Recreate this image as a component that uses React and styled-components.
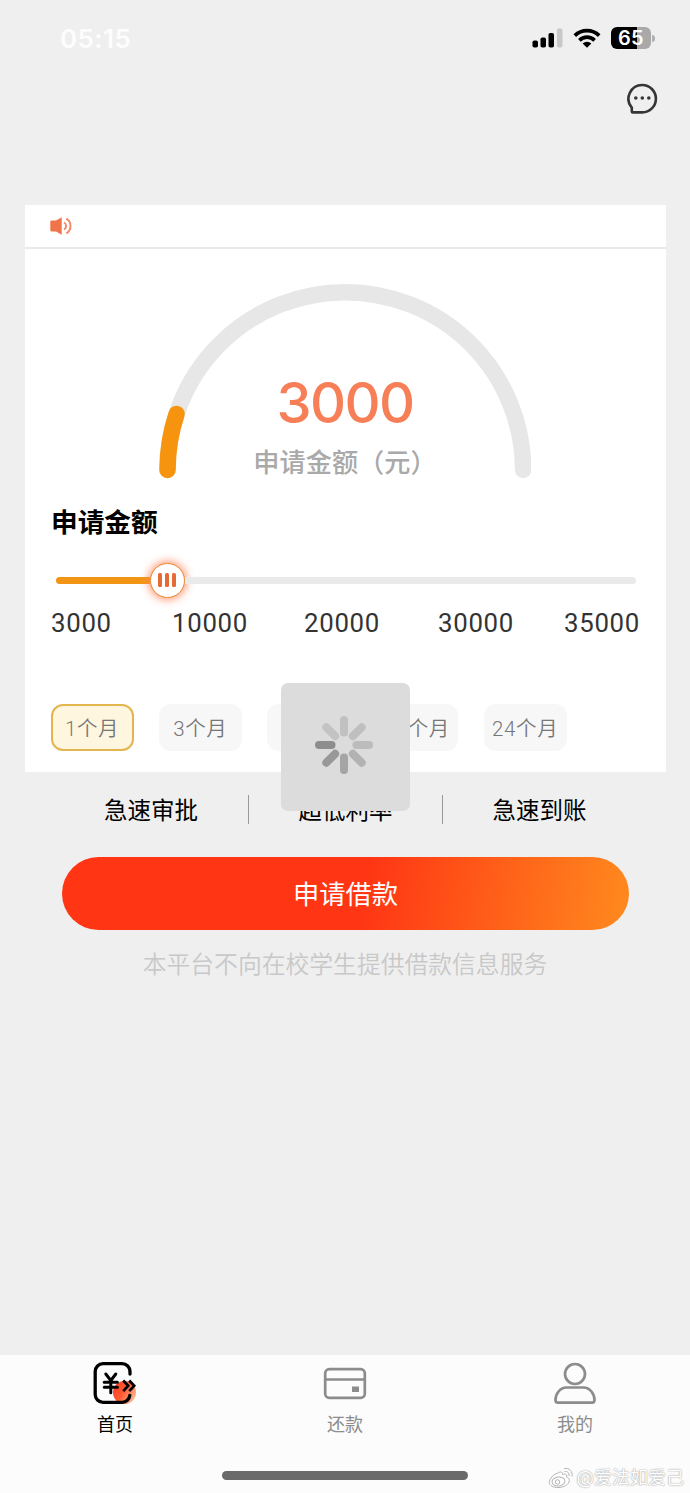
import React from 'react';
import styled, { createGlobalStyle } from 'styled-components';

const GlobalStyle = createGlobalStyle`
  * {
    box-sizing: border-box;
  }

  body {
    margin: 0;
    background: #efefef;
    font-family: Inter, "Noto Sans CJK SC", sans-serif;
  }
`;

const Screen = styled.div`
  position: relative;
  width: 690px;
  height: 1493px;
  display: flex;
  flex-direction: column;
  background: #efefef;
  overflow: hidden;
`;

const StatusBar = styled.div`
  height: 76px;
  padding: 0 35px 0 60px;
  display: flex;
  align-items: center;
  justify-content: space-between;
`;

const Clock = styled.span`
  font-size: 26px;
  font-weight: 600;
  letter-spacing: 0.4px;
  color: #fdfdfd;
`;

const StatusIcons = styled.div`
  display: flex;
  align-items: center;
  gap: 10px;

  svg {
    display: block;
  }
`;

const Battery = styled.div`
  display: flex;
  align-items: center;
  gap: 1px;
`;

const BatteryBody = styled.div`
  width: 40px;
  height: 22px;
  border-radius: 6px;
  background: linear-gradient(90deg, #000 ${props => props.$level}%, #a9a9a9 ${props => props.$level}%);
  color: #fff;
  font-size: 20px;
  font-weight: 600;
  line-height: 23px;
  letter-spacing: 0.4px;
  text-align: center;
`;

const BatteryTip = styled.div`
  width: 3px;
  height: 7px;
  border-radius: 0 3px 3px 0;
  background: #b0b0b0;
`;

const Header = styled.div`
  height: 129px;
  padding: 7px 32px 0 0;
  display: flex;
  justify-content: flex-end;
  align-items: flex-start;
`;

const Card = styled.section`
  width: 640.5px;
  height: 567px;
  margin-left: 25px;
  background: #fff;
  display: flex;
  flex-direction: column;
`;

const Notice = styled.div`
  height: 44px;
  padding: 0 25px;
  display: flex;
  align-items: center;
  border-bottom: 2px solid #e9e9e9;
`;

const Gauge = styled.div`
  width: 372px;
  height: 196px;
  margin: 34px 0 0 134px;
  display: grid;

  > * {
    grid-area: 1 / 1;
  }
`;

const GaugeText = styled.div`
  padding-top: 85px;
  display: flex;
  flex-direction: column;
  align-items: center;
`;

const GaugeAmount = styled.div`
  height: 70px;
  font-size: 56px;
  font-weight: 500;
  line-height: 70px;
  letter-spacing: -1.7px;
  color: #f77f58;
`;

const GaugeLabel = styled.div`
  height: 40px;
  margin: 5px 0 0;
  font-size: 26.2px;
  font-weight: 500;
  line-height: 40px;
  color: #a9a9a9;
`;

const SectionTitle = styled.h2`
  height: 40px;
  margin: 23px 0 0 26px;
  font-size: 26.7px;
  font-weight: 700;
  line-height: 40px;
  color: #000;
`;

const Slider = styled.div`
  width: 580px;
  height: 36px;
  margin: 20px 0 0 30.5px;
  display: flex;
  align-items: center;
`;

const SliderFill = styled.div`
  width: ${props => props.$width}px;
  height: 7px;
  border-radius: 4px 0 0 4px;
  background: #f39514;
`;

const SliderRest = styled.div`
  flex: 1;
  height: 7px;
  border-radius: 0 4px 4px 0;
  background: #eaeaea;
`;

const SliderThumb = styled.div`
  width: 35px;
  height: 35px;
  border: 1.5px solid #e8892c;
  border-radius: 50%;
  background: #fff;
  box-shadow: 0 0 10px 1px #ff8458;
  display: flex;
  align-items: center;
  justify-content: center;
  gap: 3px;
`;

const Grip = styled.i`
  width: 4px;
  height: 14px;
  border-radius: 1.5px;
  background: #e56a35;
`;

const Scale = styled.div`
  height: 40px;
  margin: 6px 0 0 26px;
  display: grid;
  grid-template-columns: 121px 132px 134px 126px 78px;
`;

const ScaleMark = styled.span`
  font-family: Roboto, Inter, sans-serif;
  font-size: 25.8px;
  line-height: 39px;
  letter-spacing: 0.7px;
  color: #333;
`;

const Terms = styled.div`
  margin: 60px 0 0 25.5px;
  display: flex;
  gap: 25.3px;
`;

const Term = styled.button`
  width: 83px;
  height: 47px;
  padding: 3px 0 0;
  border: ${props => props.$active ? '2px solid #e3b54c' : '0'};
  border-radius: 12px;
  background: ${props => props.$active ? '#fff6df' : '#f7f7f7'};
  font-family: Roboto, "Noto Sans CJK SC", sans-serif;
  font-size: 20.5px;
  font-weight: 350;
  line-height: 40px;
  letter-spacing: 0.6px;
  white-space: nowrap;
  color: #777;
`;

const Features = styled.div`
  height: 75px;
  padding: 0 54px;
  display: grid;
  grid-template-columns: repeat(3, 194px);
  align-items: center;
`;

const Feature = styled.div`
  height: 29px;
  border-left: ${props => props.$divided ? '1.5px solid #999' : '0'};
  font-size: 23.5px;
  line-height: 31px;
  text-align: center;
  color: #000;
`;

const ApplyButton = styled.button`
  width: 567px;
  height: 73px;
  margin: 10px 0 0 61.5px;
  padding: 1px 0 0 1px;
  border: 0;
  border-radius: 37px;
  background: linear-gradient(98deg, #ff3514 0%, #ff3514 53%, #ff8a1e 100%);
  font-family: inherit;
  font-size: 26.3px;
  line-height: 73px;
  color: #fff;
`;

const Disclaimer = styled.p`
  margin: 17px 0 0;
  font-size: 23.8px;
  font-weight: 350;
  line-height: 36px;
  text-align: center;
  color: #c8c8c8;
`;

const BottomBar = styled.nav`
  height: 138px;
  margin-top: auto;
  background: #fcfcfc;
  display: flex;
  flex-direction: column;
`;

const Tabs = styled.div`
  height: 116px;
  display: grid;
  grid-template-columns: repeat(3, 1fr);
`;

const Tab = styled.div`
  padding-top: 4px;
  display: flex;
  flex-direction: column;
  align-items: center;
  font-size: 18px;
  line-height: 28px;
  color: ${props => props.$active ? '#000' : '#8c8c8c'};

  svg {
    display: block;
    margin-bottom: 6px;
  }
`;

const HomeIndicator = styled.div`
  width: 246px;
  height: 9px;
  margin-left: 222px;
  border-radius: 5px;
  background: #6a6a6a;
`;

const Loading = styled.div`
  position: absolute;
  left: 281px;
  top: 683px;
  width: 129px;
  height: 128px;
  border-radius: 7px;
  background: #dcdcdc;
  display: flex;
  align-items: center;
  justify-content: center;
  padding: 0 3px 4px 0;
`;

const Watermark = styled.div`
  position: absolute;
  right: 6px;
  bottom: 2px;
  display: flex;
  align-items: center;
  gap: 3px;
  font-size: 18px;
  line-height: 26px;
  color: #fff;
  text-shadow: 0 0 1px #999, 0 0 2px #bbb;
`;

const spokes = ['#c1c1c1', '#bfbfbf', '#bcbcbc', '#b2b2b2', '#a5a5a5', '#989898', '#8d8d8d', '#c3c3c3'];

const marks = ['3000', '10000', '20000', '30000', '35000'];

const terms = ['1个月', '3个月', '6个月', '12个月', '24个月'];

const features = ['急速审批', '超低利率', '急速到账'];

function SignalIcon() {
  return (
    <svg width="31" height="20" viewBox="0 0 31 20">
      <rect x="0.5" y="12.5" width="5.5" height="7" rx="1.8" fill="#000" />
      <rect x="8.5" y="9.5" width="5.5" height="10" rx="1.8" fill="#000" />
      <rect x="16.5" y="5" width="5.5" height="14.5" rx="1.8" fill="#000" />
      <rect x="25" y="0.5" width="5.5" height="19" rx="1.8" fill="#c8c8c8" />
    </svg>
  );
}

function WifiIcon() {
  return (
    <svg width="28" height="20" viewBox="0 0 28 20">
      <g fill="none" stroke="#000" strokeWidth="3.7">
        <path d="M1.8 7.6a17.4 17.4 0 0 1 24.4 0" />
        <path d="M6.4 12.3a10.9 10.9 0 0 1 15.2 0" />
      </g>
      <path d="M9.6 15.4a6.4 6.4 0 0 1 8.8 0L14 19.8z" fill="#000" />
    </svg>
  );
}

function ChatIcon() {
  return (
    <svg width="32" height="32" viewBox="0 0 32 32">
      <path
        d="M16.2 2a13.7 13.7 0 0 1 0 27.4H6.8Q5.8 29.4 5.8 28.4V24.6A13.7 13.7 0 0 1 16.2 2z"
        fill="none"
        stroke="#353535"
        strokeWidth="2.6"
        strokeLinejoin="round"
      />
      <g fill="#353535">
        <circle cx="9.8" cy="15" r="1.8" />
        <circle cx="16.3" cy="15" r="1.8" />
        <circle cx="22.8" cy="15" r="1.8" />
      </g>
    </svg>
  );
}

function SpeakerIcon() {
  return (
    <svg width="22" height="18" viewBox="0 0 22 18">
      <path d="M1.5 3.5H6L11.700.3v17.400L6 14.500H1.500Q.3 14.500 .3 13.300V4.700Q.3 3.500 1.500 3.500z" fill="#f0744a" />
      <g fill="none" stroke="#f28a66" strokeWidth="1.9">
        <path d="M14 5.500c2.800 1.500 2.800 5.500 0 7" />
        <path d="M16.300 1.700c5.600 3 5.600 11.600 0 14.600" />
      </g>
    </svg>
  );
}

function GaugeArc() {
  return (
    <svg width="372" height="196" viewBox="0 0 372 196">
      <g fill="none" strokeWidth="16.5" strokeLinecap="round">
        <path d="M8.5 187A177.8 177.8 0 0 1 364.1 187" stroke="#e7e7e7" />
        <path d="M8.5 187A177.8 177.8 0 0 1 17.6 131" stroke="#f6940f" />
      </g>
    </svg>
  );
}

function HomeIcon() {
  return (
    <svg width="46" height="46" viewBox="0 0 46 46">
      <defs>
        <linearGradient id="ball" x1="0" y1="0" x2="1" y2="0.6">
          <stop offset="0" stopColor="#ff3a1c" />
          <stop offset="0.55" stopColor="#ff5a35" />
          <stop offset="1" stopColor="#fdb48c" />
        </linearGradient>
      </defs>
      <circle cx="32.5" cy="33.5" r="11.5" fill="url(#ball)" />
      <g fill="none" stroke="#000" strokeLinecap="round">
        <path d="M38 15V12.5a7.8 7.8 0 0 0-7.8-7.8H11a7.8 7.8 0 0 0-7.8 7.8v23a7.8 7.8 0 0 0 7.8 7.8h19.2a7.8 7.8 0 0 0 7.6-7" strokeWidth="3.3" />
        <path d="M13.8 15l5 6.500 5-6.500M12.200 23.200h13.200M12.200 28.300h13.200M18.800 22v11.800" strokeWidth="3" />
        <path d="M31.2 21.500l5 5.300-5 5.300M37.200 21.500l5 5.300-5 5.300" strokeWidth="2.7" strokeLinecap="butt" />
      </g>
    </svg>
  );
}

function CardIcon() {
  return (
    <svg width="46" height="46" viewBox="0 0 46 46">
      <rect x="3.2" y="10.2" width="39.6" height="28.6" rx="4" fill="none" stroke="#8c8c8c" strokeWidth="2.7" />
      <path d="M3 20.5h40" stroke="#8c8c8c" strokeWidth="2.3" />
      <rect x="30" y="27.5" width="7" height="5.5" fill="#8c8c8c" />
    </svg>
  );
}

function UserIcon() {
  return (
    <svg width="46" height="46" viewBox="0 0 46 46">
      <g fill="none" stroke="#8c8c8c" strokeWidth="2.7">
        <circle cx="23" cy="15" r="10" />
        <path d="M14.500 28.500h17c6.500 0 11 6.500 11 12.500 0 2-1 2.700-2.500 2.700H6c-1.500 0-2.500-.7-2.500-2.700 0-6 4.500-12.500 11-12.500z" />
      </g>
    </svg>
  );
}

function Spinner() {
  return (
    <svg width="60" height="60" viewBox="-30 -30 60 60">
      {spokes.map((color, i) => (
        <path
          key={i}
          d="M0 -12.5V-25"
          stroke={color}
          strokeWidth="8"
          strokeLinecap="round"
          transform={`rotate(${i * 45})`}
        />
      ))}
    </svg>
  );
}

function WeiboIcon() {
  return (
    <svg width="26" height="22" viewBox="0 0 26 22">
      <g fill="#fff" stroke="#b5b5b5" strokeWidth="1">
        <path d="M10 6c2-1.500 5-1.500 4.500 1.500 3-1 5 0 4 2.500 6 2 2 10-7.500 10.500C4 21 .5 17.500 1.500 14 2.500 10.500 6 7 10 6z" />
        <ellipse cx="10.5" cy="14.5" rx="6.5" ry="4.5" transform="rotate(-8 10.5 14.5)" />
        <circle cx="9.5" cy="15" r="2.2" />
        <path d="M16.500 4.500c3-.5 5 1.500 4.500 4.500M16 1.500c5.500-1 9 3 8 8" fill="none" />
      </g>
    </svg>
  );
}

function App() {
  return (
    <Screen>
      <GlobalStyle />

      <StatusBar>
        <Clock>05:15</Clock>
        <StatusIcons>
          <SignalIcon />
          <WifiIcon />
          <Battery>
            <BatteryBody $level={65}>65</BatteryBody>
            <BatteryTip />
          </Battery>
        </StatusIcons>
      </StatusBar>

      <Header>
        <ChatIcon />
      </Header>

      <Card>
        <Notice>
          <SpeakerIcon />
        </Notice>

        <Gauge>
          <GaugeArc />
          <GaugeText>
            <GaugeAmount>3000</GaugeAmount>
            <GaugeLabel>申请金额（元）</GaugeLabel>
          </GaugeText>
        </Gauge>

        <SectionTitle>申请金额</SectionTitle>

        <Slider>
          <SliderFill $width={94} />
          <SliderThumb>
            <Grip />
            <Grip />
            <Grip />
          </SliderThumb>
          <SliderRest />
        </Slider>

        <Scale>
          {marks.map(mark => (
            <ScaleMark key={mark}>{mark}</ScaleMark>
          ))}
        </Scale>

        <Terms>
          {terms.map((term, i) => (
            <Term key={term} $active={i === 0}>{term}</Term>
          ))}
        </Terms>
      </Card>

      <Features>
        {features.map((feature, i) => (
          <Feature key={feature} $divided={i > 0}>{feature}</Feature>
        ))}
      </Features>

      <ApplyButton>申请借款</ApplyButton>
      <Disclaimer>本平台不向在校学生提供借款信息服务</Disclaimer>

      <BottomBar>
        <Tabs>
          <Tab $active>
            <HomeIcon />
            首页
          </Tab>
          <Tab>
            <CardIcon />
            还款
          </Tab>
          <Tab>
            <UserIcon />
            我的
          </Tab>
        </Tabs>
        <HomeIndicator />
      </BottomBar>

      <Loading>
        <Spinner />
      </Loading>

      <Watermark>
        <WeiboIcon />
        @爱法如爱己
      </Watermark>
    </Screen>
  );
}

export default App;
